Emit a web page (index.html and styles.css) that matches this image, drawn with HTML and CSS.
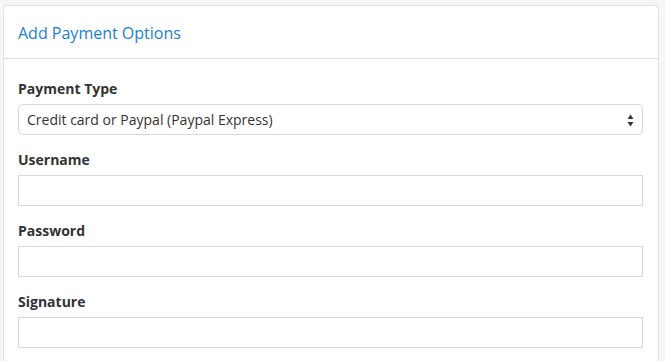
FILE: index.html
```html
<!DOCTYPE html>
<html>
<head>
<meta charset="utf-8">
<link rel="stylesheet" href="styles.css">
</head>
<body>
<div class="panel">
  <div class="panel-heading">Add Payment Options</div>
  <div class="panel-body">
    <div class="form-group">
      <label class="label">Payment Type</label>
      <div class="select">
        <span>Credit card or Paypal (Paypal Express)</span>
        <svg class="arrows" width="7" height="13" viewBox="0 0 7 13"><path d="M3.5 0.5 L6.5 5 L0.5 5 Z" fill="#333"/><path d="M0.5 8 L6.5 8 L3.5 12.5 Z" fill="#333"/></svg>
      </div>
    </div>
    <div class="form-group">
      <label class="label">Username</label>
      <div class="input"></div>
    </div>
    <div class="form-group">
      <label class="label">Password</label>
      <div class="input"></div>
    </div>
    <div class="form-group">
      <label class="label">Signature</label>
      <div class="input"></div>
    </div>
  </div>
</div>
</body>
</html>
```
FILE: styles.css
```css
html, body {
  margin: 0;
  padding: 0;
  background: #f6f6f6;
  font-family: "Open Sans", "Liberation Sans", sans-serif;
  color: #333;
}
body {
  padding: 5px 6px 0 3px;
  height: 361px;
  box-sizing: border-box;
  overflow: hidden;
}
.panel {
  background: #fff;
  border: 1px solid #e3e3e3;
  border-bottom: none;
  border-radius: 4px 4px 0 0;
  height: 100%;
  box-sizing: border-box;
}
.panel-heading {
  padding: 16px 14px 14px;
  font-size: 16px;
  line-height: 22px;
  color: #1b7fd4;
  border-bottom: 1px solid #dedede;
}
.panel-body {
  padding: 20px 15px 0 14px;
}
.form-group {
  margin-bottom: 15px;
}
.label {
  display: block;
  font-size: 14px;
  font-weight: bold;
  line-height: 20px;
  margin-bottom: 5px;
  color: #333;
}
.select {
  height: 31px;
  box-sizing: border-box;
  border: 1px solid #d9d9d9;
  border-radius: 5px;
  display: flex;
  align-items: center;
  justify-content: space-between;
  padding: 0 8px 0 8px;
  font-size: 14px;
  color: #333;
  background: #fff;
}
.arrows {
  display: block;
  margin-top: 1px;
}
.input {
  height: 31px;
  box-sizing: border-box;
  border: 1px solid #d9d9d9;
  background: #fff;
}
```
